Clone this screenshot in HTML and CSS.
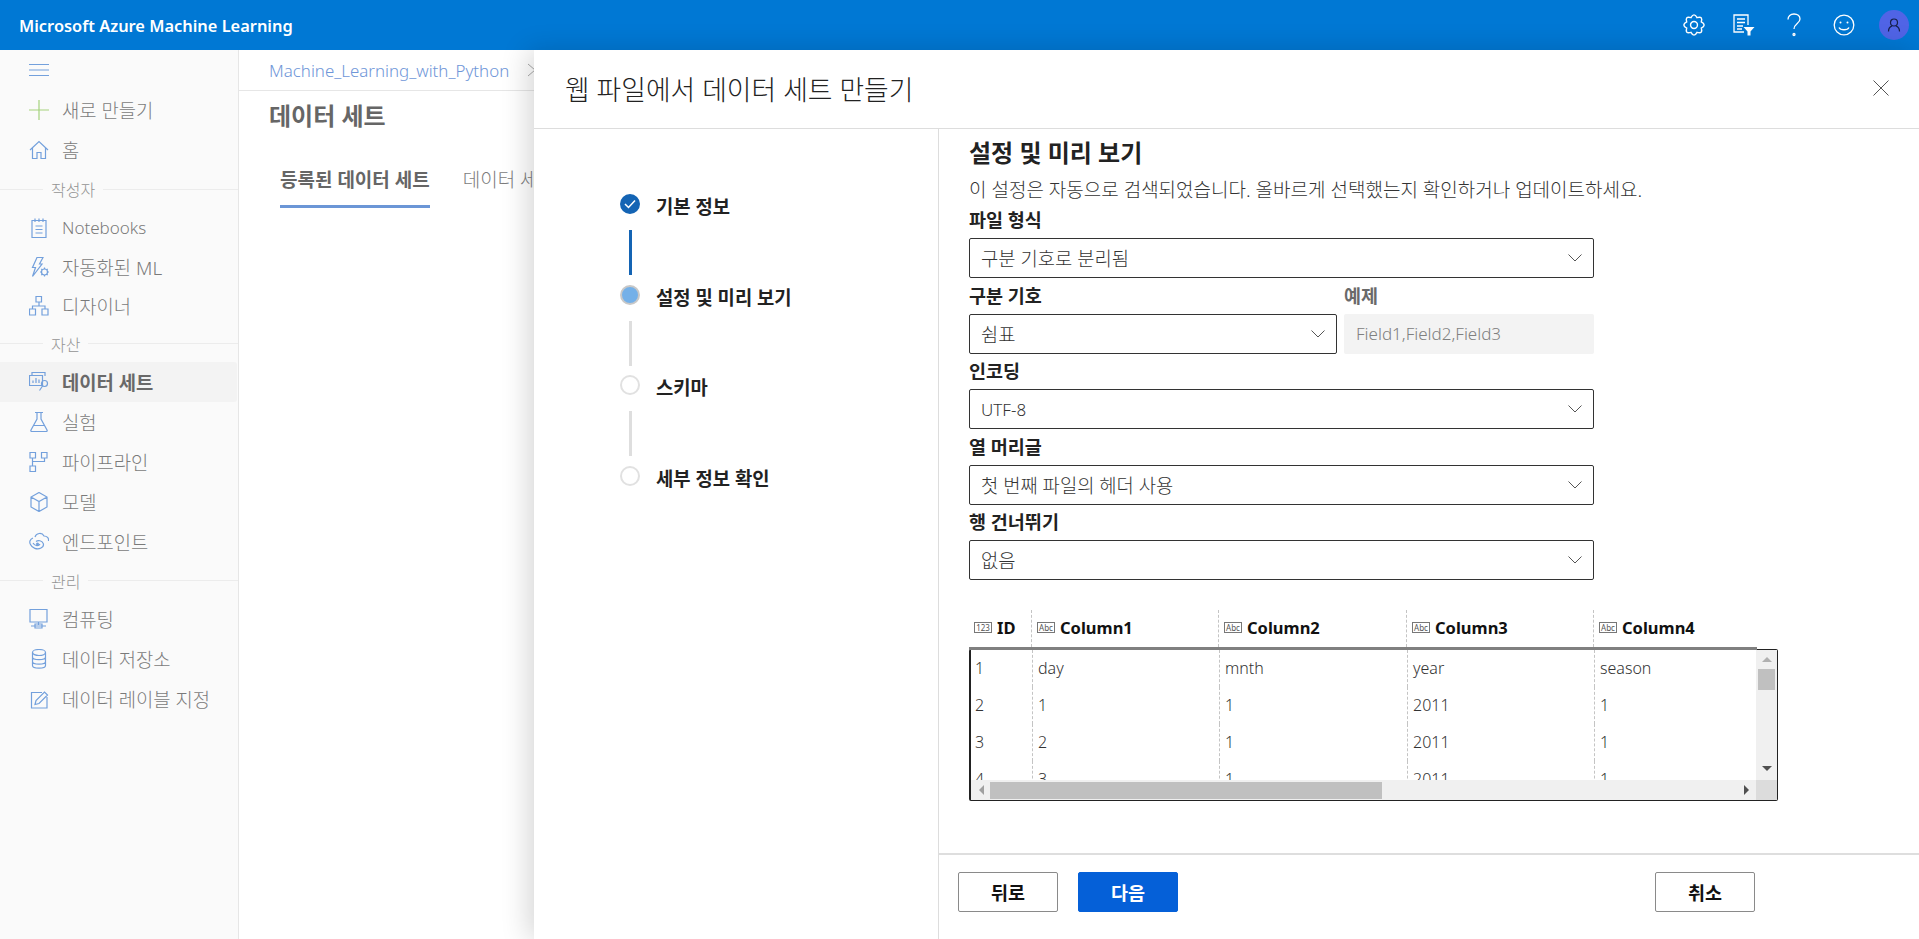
FILE: index.html
```html
<!DOCTYPE html>
<html lang="ko">
<head>
    <meta charset="UTF-8">
    <title>Microsoft Azure Machine Learning</title>
    <link rel="stylesheet" href="styles.css">
</head>
<body>
    <header class="topbar">
        <div class="brand">Microsoft Azure Machine Learning</div>
        <div class="top-icons">
            <div class="top-slot"><svg class="top-icon" width="26" height="26" viewBox="-2 -2 24 24"><path d="M16.74 12.79Q18.49 18.49 12.79 16.74Q10 22 7.21 16.74Q1.51 18.49 3.26 12.79Q-2 10 3.26 7.21Q1.51 1.51 7.21 3.26Q10 -2 12.79 3.26Q18.49 1.51 16.74 7.21Q22 10 16.74 12.79Z"/><circle cx="10" cy="10" r="3.2"/></svg></div>
            <div class="top-slot"><svg class="top-icon" width="22" height="22" viewBox="0 0 22 22"><path d="M11 18H1V1H15V11M4 5H12M4 8.500H12M4 12H10M4 15H9"/><path class="solid" d="M10.500 13H21.500L17.500 17.500V21.500H14.500V17.500Z"/></svg></div>
            <div class="top-slot"><svg class="top-icon" width="22" height="26" viewBox="0 0 22 26"><path d="M5 7.500C5 4 7.500 2 11 2C14.500 2 17 4 17 7C17 11.500 11 11.500 11 17"/><circle cx="11" cy="22.500" r="1"/></svg></div>
            <div class="top-slot"><svg class="top-icon" width="22" height="22" viewBox="0 0 22 22"><circle cx="11" cy="11" r="9.800"/><circle class="solid" cx="7.500" cy="8.500" r="1"/><circle class="solid" cx="14.500" cy="8.500" r="1"/><path d="M6 13.500C7.500 16.500 14.500 16.500 16 13.500"/></svg></div>
            <div class="top-slot"><div class="avatar"><svg width="14" height="14" viewBox="0 0 14 14"><circle cx="7" cy="4.500" r="3.500"/><path d="M1.500 13.500C1.500 9 4 8.500 5 8M12.500 13.500C12.500 9 10 8.500 9 8"/></svg></div></div>
        </div>
    </header>

    <div class="app">
        <nav class="sidebar">
            <div class="nav-item">
                <svg class="nav-icon" viewBox="0 0 20 20"><path d="M0 4.500H20M0 10H20M0 15.500H20"/></svg>
            </div>
            <div class="nav-item">
                <svg class="nav-icon green" viewBox="0 0 20 20"><path d="M10 0V20M0 10H20"/></svg>
                <span>새로 만들기</span>
            </div>
            <div class="nav-item">
                <svg class="nav-icon" viewBox="0 0 20 20"><path d="M1 10L10 1.500L19 10M3.500 8V18.500H8V12.500H12V18.500H16.500V8"/></svg>
                <span>홈</span>
            </div>
            <div class="nav-section sec-first"><span>작성자</span></div>
            <div class="nav-group">
                <div class="nav-item">
                    <svg class="nav-icon" viewBox="0 0 20 20"><path d="M3 2.500H17V19.500H3ZM6 .5V4M10 .5V4M14 .5V4M6.500 8H13.500M6.500 11.500H13.500M6.500 15H13.500"/></svg>
                    <span class="latin">Notebooks</span>
                </div>
                <div class="nav-item">
                    <svg class="nav-icon" viewBox="0 0 20 20"><path d="M8 .5H14L10.500 7H13L3.500 19.500L6.500 10.500H3.500Z"/><circle cx="15.500" cy="15" r="3"/><path d="M15.500 10.500V12M15.500 18V19.500M11 15H12.500M18.500 15H20M12.300 11.800L13.300 12.800M17.700 17.200L18.700 18.200M12.300 18.200L13.300 17.200M17.700 12.800L18.700 11.800"/></svg>
                    <span>자동화된 ML</span>
                </div>
                <div class="nav-item">
                    <svg class="nav-icon" viewBox="0 0 20 20"><path d="M7 .5H12.500V6H7ZM.5 13H6.500V19H.5ZM13 13H19V19H13ZM10 6V10M3.500 13V10H16V13"/></svg>
                    <span>디자이너</span>
                </div>
            </div>
            <div class="nav-section sec-mid"><span>자산</span></div>
            <div class="nav-item active">
                <svg class="nav-icon" viewBox="0 0 20 20"><path d="M3 3.500V.5H16V4M.5 3.500H13.500V13.500H.5ZM4 11V8.500M7 11V6M10 11V7.500"/><circle cx="15.500" cy="11.500" r="3"/><path d="M13.500 14L10.500 18.500"/></svg>
                <span>데이터 세트</span>
            </div>
            <div class="nav-item">
                <svg class="nav-icon" viewBox="0 0 20 20"><path d="M6 .5H14M8 .5V7L2 18C1.500 19 2 19.500 3 19.500H17C18 19.500 18.500 19 18 18L12 7V.5M4.500 13.500H15.500"/></svg>
                <span>실험</span>
            </div>
            <div class="nav-item">
                <svg class="nav-icon" viewBox="0 0 20 20"><path d="M1 .5H6.500V6H1ZM12.500 .5H18V6H12.500ZM1 14H6.500V19.500H1ZM3.500 6V14M15.500 6V9.500H3.500"/></svg>
                <span>파이프라인</span>
            </div>
            <div class="nav-item">
                <svg class="nav-icon" viewBox="0 0 20 20"><path d="M10 .5L18 5V15L10 19.500L2 15V5ZM2 5L10 9.500L18 5M10 9.500V19.500"/></svg>
                <span>모델</span>
            </div>
            <div class="nav-item">
                <svg class="nav-icon" viewBox="0 0 20 20"><path d="M6 5C7 1 13 0 15 4C18 4 20 6 19.500 9M4 6C1 7 0 10 1.500 12.500C3 16 8 18 12 16C14 15 15 13 14 11C13 8.500 9 8 7 9.500M4 11C6 14.500 10 14 11 12"/><circle class="solid" cx="8.500" cy="12" r="1.500"/></svg>
                <span>엔드포인트</span>
            </div>
            <div class="nav-section sec-mid"><span>관리</span></div>
            <div class="nav-item">
                <svg class="nav-icon" viewBox="0 0 20 20"><path d="M1 .5H18V13H1ZM9.500 13V16M2 17H17M6 15H13V19H6Z"/></svg>
                <span>컴퓨팅</span>
            </div>
            <div class="nav-item">
                <svg class="nav-icon" viewBox="0 0 20 20"><ellipse cx="10" cy="3.500" rx="6.500" ry="3"/><path d="M3.500 3.500V16.500C3.500 20 16.500 20 16.500 16.500V3.500M3.500 8C3.500 11.500 16.500 11.500 16.500 8M3.500 12.500C3.500 16 16.500 16 16.500 12.500"/></svg>
                <span>데이터 저장소</span>
            </div>
            <div class="nav-item">
                <svg class="nav-icon" viewBox="0 0 20 20"><path d="M18 8V19H2.500V3.500H13M6 15.500L7 11.500L15.500 3L18.500 6L10 14.500Z"/></svg>
                <span>데이터 레이블 지정</span>
            </div>
        </nav>

        <main class="main">
            <div class="crumbs">
                <a>Machine_Learning_with_Python</a>
                <svg width="10" height="14" viewBox="0 0 10 14"><path d="M1 1L8 7L1 13"/></svg>
            </div>
            <h2 class="page-title">데이터 세트</h2>
            <div class="tabs">
                <div class="tab selected">등록된 데이터 세트</div>
                <div class="tab">데이터 세트 모니터</div>
            </div>
        </main>
    </div>

    <!-- slide-in panel -->
    <section class="panel">
        <div class="panel-head">
            <h1>웹 파일에서 데이터 세트 만들기</h1>
            <svg class="close" width="16" height="16" viewBox="0 0 16 16"><path d="M.5 .5L15.500 15.500M15.500 .5L.5 15.500"/></svg>
        </div>
        <div class="panel-body">
            <aside class="steps">
                <div class="step">
                    <div class="dot done"><svg width="12" height="10" viewBox="0 0 12 10"><path d="M1 5L4.500 8.500L11 1.500"/></svg></div>
                    <div class="step-name">기본 정보</div>
                </div>
                <div class="line blue"></div>
                <div class="step">
                    <div class="dot current"></div>
                    <div class="step-name">설정 및 미리 보기</div>
                </div>
                <div class="line"></div>
                <div class="step">
                    <div class="dot"></div>
                    <div class="step-name">스키마</div>
                </div>
                <div class="line"></div>
                <div class="step">
                    <div class="dot"></div>
                    <div class="step-name">세부 정보 확인</div>
                </div>
            </aside>

            <div class="content">
                <div class="form">
                    <h3>설정 및 미리 보기</h3>
                    <p class="hint">이 설정은 자동으로 검색되었습니다. 올바르게 선택했는지 확인하거나 업데이트하세요.</p>

                    <label class="field-label">파일 형식</label>
                    <div class="select"><span>구분 기호로 분리됨</span><svg class="chev" viewBox="0 0 14 8"><path d="M.5 .5L7 7L13.500 .5"/></svg></div>

                    <div class="split">
                        <div class="split-left">
                            <label class="field-label">구분 기호</label>
                            <div class="select"><span>쉼표</span><svg class="chev" viewBox="0 0 14 8"><path d="M.5 .5L7 7L13.500 .5"/></svg></div>
                        </div>
                        <div class="split-right">
                            <label class="field-label muted">예제</label>
                            <div class="readonly">Field1,Field2,Field3</div>
                        </div>
                    </div>

                    <label class="field-label">인코딩</label>
                    <div class="select"><span class="latin">UTF-8</span><svg class="chev" viewBox="0 0 14 8"><path d="M.5 .5L7 7L13.500 .5"/></svg></div>

                    <label class="field-label">열 머리글</label>
                    <div class="select"><span>첫 번째 파일의 헤더 사용</span><svg class="chev" viewBox="0 0 14 8"><path d="M.5 .5L7 7L13.500 .5"/></svg></div>

                    <label class="field-label">행 건너뛰기</label>
                    <div class="select"><span>없음</span><svg class="chev" viewBox="0 0 14 8"><path d="M.5 .5L7 7L13.500 .5"/></svg></div>

                    <div class="grid-head">
                        <div class="cell"><i class="type">123</i><b>ID</b></div>
                        <div class="cell"><i class="type">Abc</i><b>Column1</b></div>
                        <div class="cell"><i class="type">Abc</i><b>Column2</b></div>
                        <div class="cell"><i class="type">Abc</i><b>Column3</b></div>
                        <div class="cell"><i class="type">Abc</i><b>Column4</b></div>
                    </div>
                    <div class="grid-frame">
                        <div class="grid-top">
                            <div class="grid-body">
                                <div class="row"><div class="cell">1</div><div class="cell">day</div><div class="cell">mnth</div><div class="cell">year</div><div class="cell">season</div></div>
                                <div class="row"><div class="cell">2</div><div class="cell">1</div><div class="cell">1</div><div class="cell">2011</div><div class="cell">1</div></div>
                                <div class="row"><div class="cell">3</div><div class="cell">2</div><div class="cell">1</div><div class="cell">2011</div><div class="cell">1</div></div>
                                <div class="row"><div class="cell">4</div><div class="cell">3</div><div class="cell">1</div><div class="cell">2011</div><div class="cell">1</div></div>
                            </div>
                            <div class="vscroll">
                                <div class="arrow up"></div>
                                <div class="vthumb"></div>
                                <div class="arrow down"></div>
                            </div>
                        </div>
                        <div class="hscroll">
                            <div class="arrow left"></div>
                            <div class="hthumb"></div>
                            <div class="arrow right"></div>
                            <div class="corner"></div>
                        </div>
                    </div>
                </div>

                <div class="panel-foot">
                    <button class="btn">뒤로</button>
                    <button class="btn primary">다음</button>
                    <button class="btn cancel">취소</button>
                </div>
            </div>
        </div>
    </section>
</body>
</html>
```

FILE: styles.css
```css
* {
    box-sizing: border-box;
}

body {
    margin: 0;
    height: 939px;
    overflow: hidden;
    font-family: "Noto Sans", "Noto Sans CJK KR", sans-serif;
    font-size: 16px;
    color: #222;
    background: #fff;
}

.topbar {
    height: 50px;
    background: #0078d4;
    color: #fff;
    display: flex;
    align-items: center;
    justify-content: space-between;
    padding: 0 0 0 19px;
}

.brand {
    font-size: 16.400px;
    font-weight: 600;
}

.top-icons {
    display: flex;
    align-items: center;
}

.top-slot {
    width: 50px;
    height: 50px;
    display: flex;
    align-items: center;
    justify-content: center;
}

.top-icon {
    fill: none;
    stroke: #fff;
    stroke-width: 1.300;
}

.top-icon .solid {
    fill: #fff;
    stroke: none;
}

.avatar {
    width: 30px;
    height: 30px;
    border-radius: 50%;
    background: #5064e6;
    display: flex;
    align-items: center;
    justify-content: center;
}

.avatar svg {
    fill: none;
    stroke: #16204a;
    stroke-width: 1.200;
}

.app {
    display: flex;
    height: 889px;
}

/* left nav, washed out by the panel overlay */
.sidebar {
    width: 239px;
    flex-shrink: 0;
    background: #fafafa;
    border-right: 1px solid #e6e6e6;
    color: #7a7a7a;
}

.nav-item {
    height: 40px;
    display: flex;
    align-items: center;
    padding-left: 29px;
    gap: 13px;
    font-size: 18.800px;
    font-weight: 300;
}

.nav-item .latin {
    font-size: 17px;
}

.nav-group .nav-item {
    height: 39px;
}

.nav-item.active {
    background: #f3f3f3;
    border-radius: 0 3px 3px 0;
    margin-right: 1px;
    font-weight: 700;
    color: #696969;
}

.nav-icon {
    width: 20px;
    height: 20px;
    flex-shrink: 0;
    fill: none;
    stroke: #73a0dc;
    stroke-width: 1.200;
}

.nav-icon.green {
    stroke: #a5d27d;
}

.nav-icon .solid {
    fill: #73a0dc;
    stroke: none;
}

.nav-section {
    display: flex;
    align-items: center;
    font-size: 16px;
    font-weight: 300;
    color: #949494;
}

.nav-section::before {
    content: "";
    width: 43px;
    border-top: 1px solid #ececec;
}

.nav-section::after {
    content: "";
    flex: 1;
    border-top: 1px solid #ececec;
}

.nav-section span {
    padding: 0 8px;
}

.sec-first {
    height: 38px;
}

.sec-mid {
    height: 37px;
}

.main {
    flex: 1;
    color: #6b6b6b;
    min-width: 0;
}

.crumbs {
    height: 41px;
    border-bottom: 1px solid #e6e6e6;
    padding: 0 0 0 30px;
    display: flex;
    align-items: center;
    gap: 18px;
    font-size: 16.900px;
    font-weight: 300;
    color: #6f96d8;
}

.crumbs svg {
    fill: none;
    stroke: #aaa;
}

.page-title {
    margin: 8px 0 0 30px;
    font-size: 24px;
    line-height: 34px;
    font-weight: 700;
    color: #666;
}

.tabs {
    display: flex;
    gap: 33px;
    margin: 34px 0 0 41px;
    white-space: nowrap;
}

.tab {
    height: 41px;
    font-size: 19px;
    line-height: 26px;
    font-weight: 300;
    color: #7c7c7c;
}

.tab.selected {
    font-weight: 700;
    color: #666;
    border-bottom: 3px solid #6b96d6;
}

.panel {
    position: absolute;
    left: 534px;
    top: 50px;
    right: 0;
    bottom: 0;
    background: #fff;
    box-shadow: -6px 0 26px rgba(0, 0, 0, 0.16);
    display: flex;
    flex-direction: column;
}

.panel-head {
    height: 79px;
    border-bottom: 1px solid #ddd;
    display: flex;
    align-items: center;
    justify-content: space-between;
    padding: 0 30px 2px 31px;
}

.panel-head h1 {
    margin: 0;
    font-size: 26.800px;
    font-weight: 300;
    color: #222;
}

.close {
    fill: none;
    stroke: #555;
}

.panel-body {
    flex: 1;
    display: flex;
    min-height: 0;
}

.steps {
    width: 405px;
    flex-shrink: 0;
    border-right: 1px solid #ddd;
    padding: 65px 0 0 86px;
}

.step {
    display: flex;
    align-items: flex-start;
    gap: 16px;
    height: 30px;
}

.dot {
    width: 20px;
    height: 20px;
    border-radius: 50%;
    border: 2px solid #e1e1e1;
    background: #fff;
    display: flex;
    align-items: center;
    justify-content: center;
    flex-shrink: 0;
}

.dot.done {
    background: #1464b4;
    border-color: #1464b4;
}

.dot.done svg {
    fill: none;
    stroke: #fff;
    stroke-width: 1.500;
}

.dot.current {
    background: #74b0e8;
    border-color: #c8c8c8;
}

.step-name {
    font-size: 18.800px;
    font-weight: 700;
    line-height: 26px;
    white-space: nowrap;
}

.line {
    width: 3px;
    height: 45px;
    margin: 6px 0 9.500px 9px;
    background: #dedede;
}

.line.blue {
    background: #1464b4;
}

.content {
    flex: 1;
    display: flex;
    flex-direction: column;
    min-width: 0;
}

.form {
    flex: 1;
    padding: 10px 0 0 30px;
}

.form h3 {
    margin: 0;
    font-size: 24px;
    line-height: 28px;
    font-weight: 700;
    color: #222;
}

.hint {
    margin: 12px 0 0;
    font-size: 19px;
    line-height: 23.500px;
    font-weight: 300;
    color: #333;
    white-space: nowrap;
}

.field-label {
    display: flex;
    align-items: center;
    height: 35.500px;
    padding-bottom: 2px;
    font-size: 18.500px;
    font-weight: 700;
    color: #222;
}

.field-label.muted {
    color: #6a6a6a;
}

.select {
    width: 625px;
    height: 40px;
    border: 1px solid #333;
    border-radius: 2px;
    display: flex;
    align-items: center;
    justify-content: space-between;
    padding: 0 11px;
    font-size: 18.800px;
    font-weight: 300;
    color: #333;
}

.select .latin {
    font-size: 17px;
}

.chev {
    width: 14px;
    height: 8px;
    fill: none;
    stroke: #555;
}

.split {
    display: flex;
    width: 625px;
    gap: 7px;
}

.split-left {
    width: 368px;
}

.split-left .select {
    width: 100%;
}

.split-right {
    flex: 1;
}

.readonly {
    height: 40px;
    background: #f3f3f3;
    border-radius: 2px;
    display: flex;
    align-items: center;
    padding-left: 12px;
    font-size: 17px;
    font-weight: 300;
    color: #808080;
}

/* preview grid */
.grid-head,
.row {
    display: grid;
    grid-template-columns: 62px 187px 188px 187px 164px;
}

.grid-head {
    position: relative;
    z-index: 1;
    width: 788px;
    height: 40px;
    margin-top: 30px;
    border-bottom: 3px solid #808080;
}

.grid-head .cell {
    display: flex;
    align-items: center;
    gap: 5px;
    padding-bottom: 2px;
}

.grid-head b {
    font-size: 16.500px;
    font-weight: 700;
    color: #111;
}

.type {
    width: 18px;
    height: 11px;
    border: 1px solid #777;
    font-style: normal;
    font-size: 8px;
    line-height: 9px;
    text-align: center;
    color: #555;
    flex-shrink: 0;
}

.cell {
    padding-left: 5px;
    border-left: 1px dashed #c4c4c4;
    overflow: hidden;
    white-space: nowrap;
}

.cell:first-child {
    border-left: none;
    padding-left: 5px;
}

.grid-frame {
    width: 809px;
    height: 152px;
    margin-top: -1px;
    border: 1px solid #222;
    border-left-width: 2px;
    border-radius: 2px;
    display: flex;
    flex-direction: column;
}

.grid-top {
    height: 130px;
    display: flex;
}

.grid-body {
    flex: 1;
    overflow: hidden;
    margin-left: -1px;
}

.row {
    height: 37px;
    font-weight: 300;
    color: #333;
    line-height: 37px;
}

.vscroll {
    width: 21px;
    background: #f0f0f0;
    display: flex;
    flex-direction: column;
    align-items: center;
    padding-top: 7px;
}

.vthumb {
    width: 17px;
    height: 21px;
    margin-top: 7px;
    background: #c0c0c0;
}

.arrow {
    width: 0;
    height: 0;
    border: 5px solid transparent;
    flex-shrink: 0;
}

.arrow.up {
    border-top: none;
    border-bottom: 5px solid #b0b0b0;
}

.arrow.down {
    border-bottom: none;
    border-top: 5px solid #505050;
    margin-top: auto;
    margin-bottom: 9px;
}

.arrow.left {
    border-left: none;
    border-right: 5px solid #a0a0a0;
    margin-left: 8px;
}

.arrow.right {
    border-right: none;
    border-left: 5px solid #505050;
    margin-left: auto;
    margin-right: 7px;
}

.hscroll {
    flex: 1;
    background: #f0f0f0;
    display: flex;
    align-items: center;
}

.hthumb {
    width: 392px;
    height: 17px;
    margin-left: 6px;
    background: #c0c0c0;
}

.corner {
    width: 21px;
    height: 100%;
    background: #dcdcdc;
}

.panel-foot {
    height: 86px;
    border-top: 2px solid #dedede;
    display: flex;
    gap: 20px;
    padding: 17px 164px 0 19px;
}

.btn {
    width: 100px;
    height: 40px;
    border: 1px solid #8a8a8a;
    border-radius: 2px;
    background: #fff;
    font-family: inherit;
    font-size: 18.500px;
    font-weight: 700;
    color: #111;
}

.btn.primary {
    background: #0560d8;
    border-color: #0560d8;
    color: #fff;
}

.btn.cancel {
    margin-left: auto;
}
```
